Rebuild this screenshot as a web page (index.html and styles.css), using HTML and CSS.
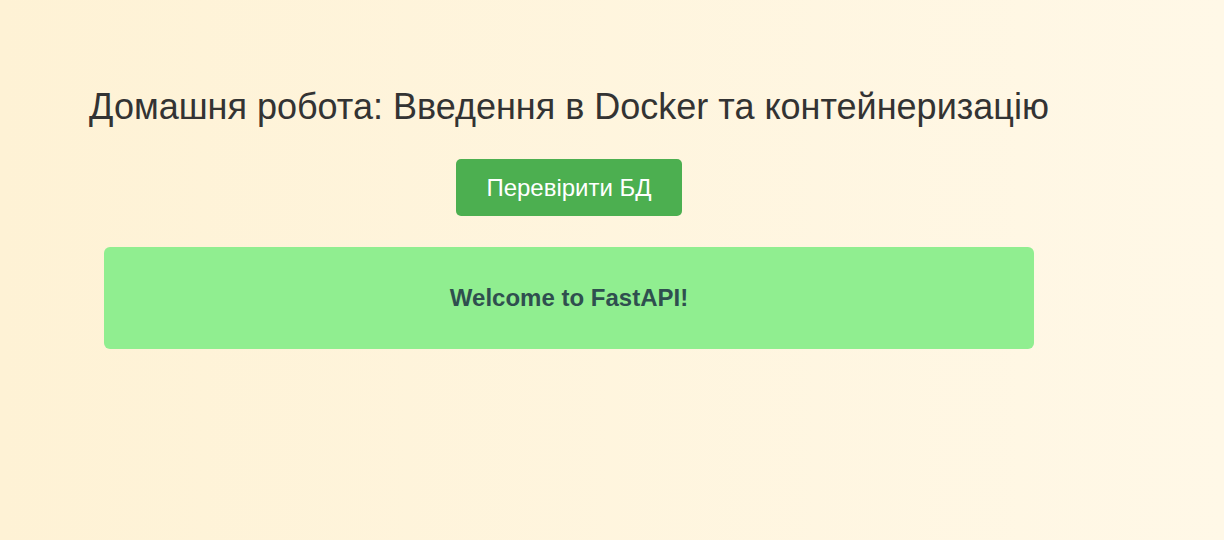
FILE: index.html
```html
<!DOCTYPE html>
<html lang="uk">
<head>
<meta charset="utf-8">
<title>Домашня робота</title>
<link rel="stylesheet" href="styles.css">
</head>
<body>
<main class="page">
  <h1 class="title">Домашня робота: Введення в Docker та контейнеризацію</h1>
  <button class="check-btn" type="button">Перевірити БД</button>
  <div class="message">Welcome to FastAPI!</div>
</main>
</body>
</html>
```

FILE: styles.css
```css
html, body {
  margin: 0;
  height: 100%;
}
body {
  font-family: "Liberation Sans", Arial, sans-serif;
  background: linear-gradient(to right, #fef2d5, #fff8e7);
  color: #333;
}
.page {
  width: 1138px;
  display: flex;
  flex-direction: column;
  align-items: center;
  padding-top: 86px;
}
.title {
  margin: 0;
  font-size: 36px;
  font-weight: normal;
  line-height: 42px;
  color: #333;
}
.check-btn {
  margin-top: 31px;
  width: 226px;
  height: 57px;
  border: none;
  border-radius: 5px;
  background: #4caf50;
  color: #fff;
  font-family: inherit;
  font-size: 24px;
  cursor: pointer;
}
.message {
  margin-top: 31px;
  width: 930px;
  height: 102px;
  box-sizing: border-box;
  display: flex;
  align-items: center;
  justify-content: center;
  background: #90ee90;
  border-radius: 6px;
  color: #2f4f4f;
  font-size: 24px;
  font-weight: bold;
}
```
